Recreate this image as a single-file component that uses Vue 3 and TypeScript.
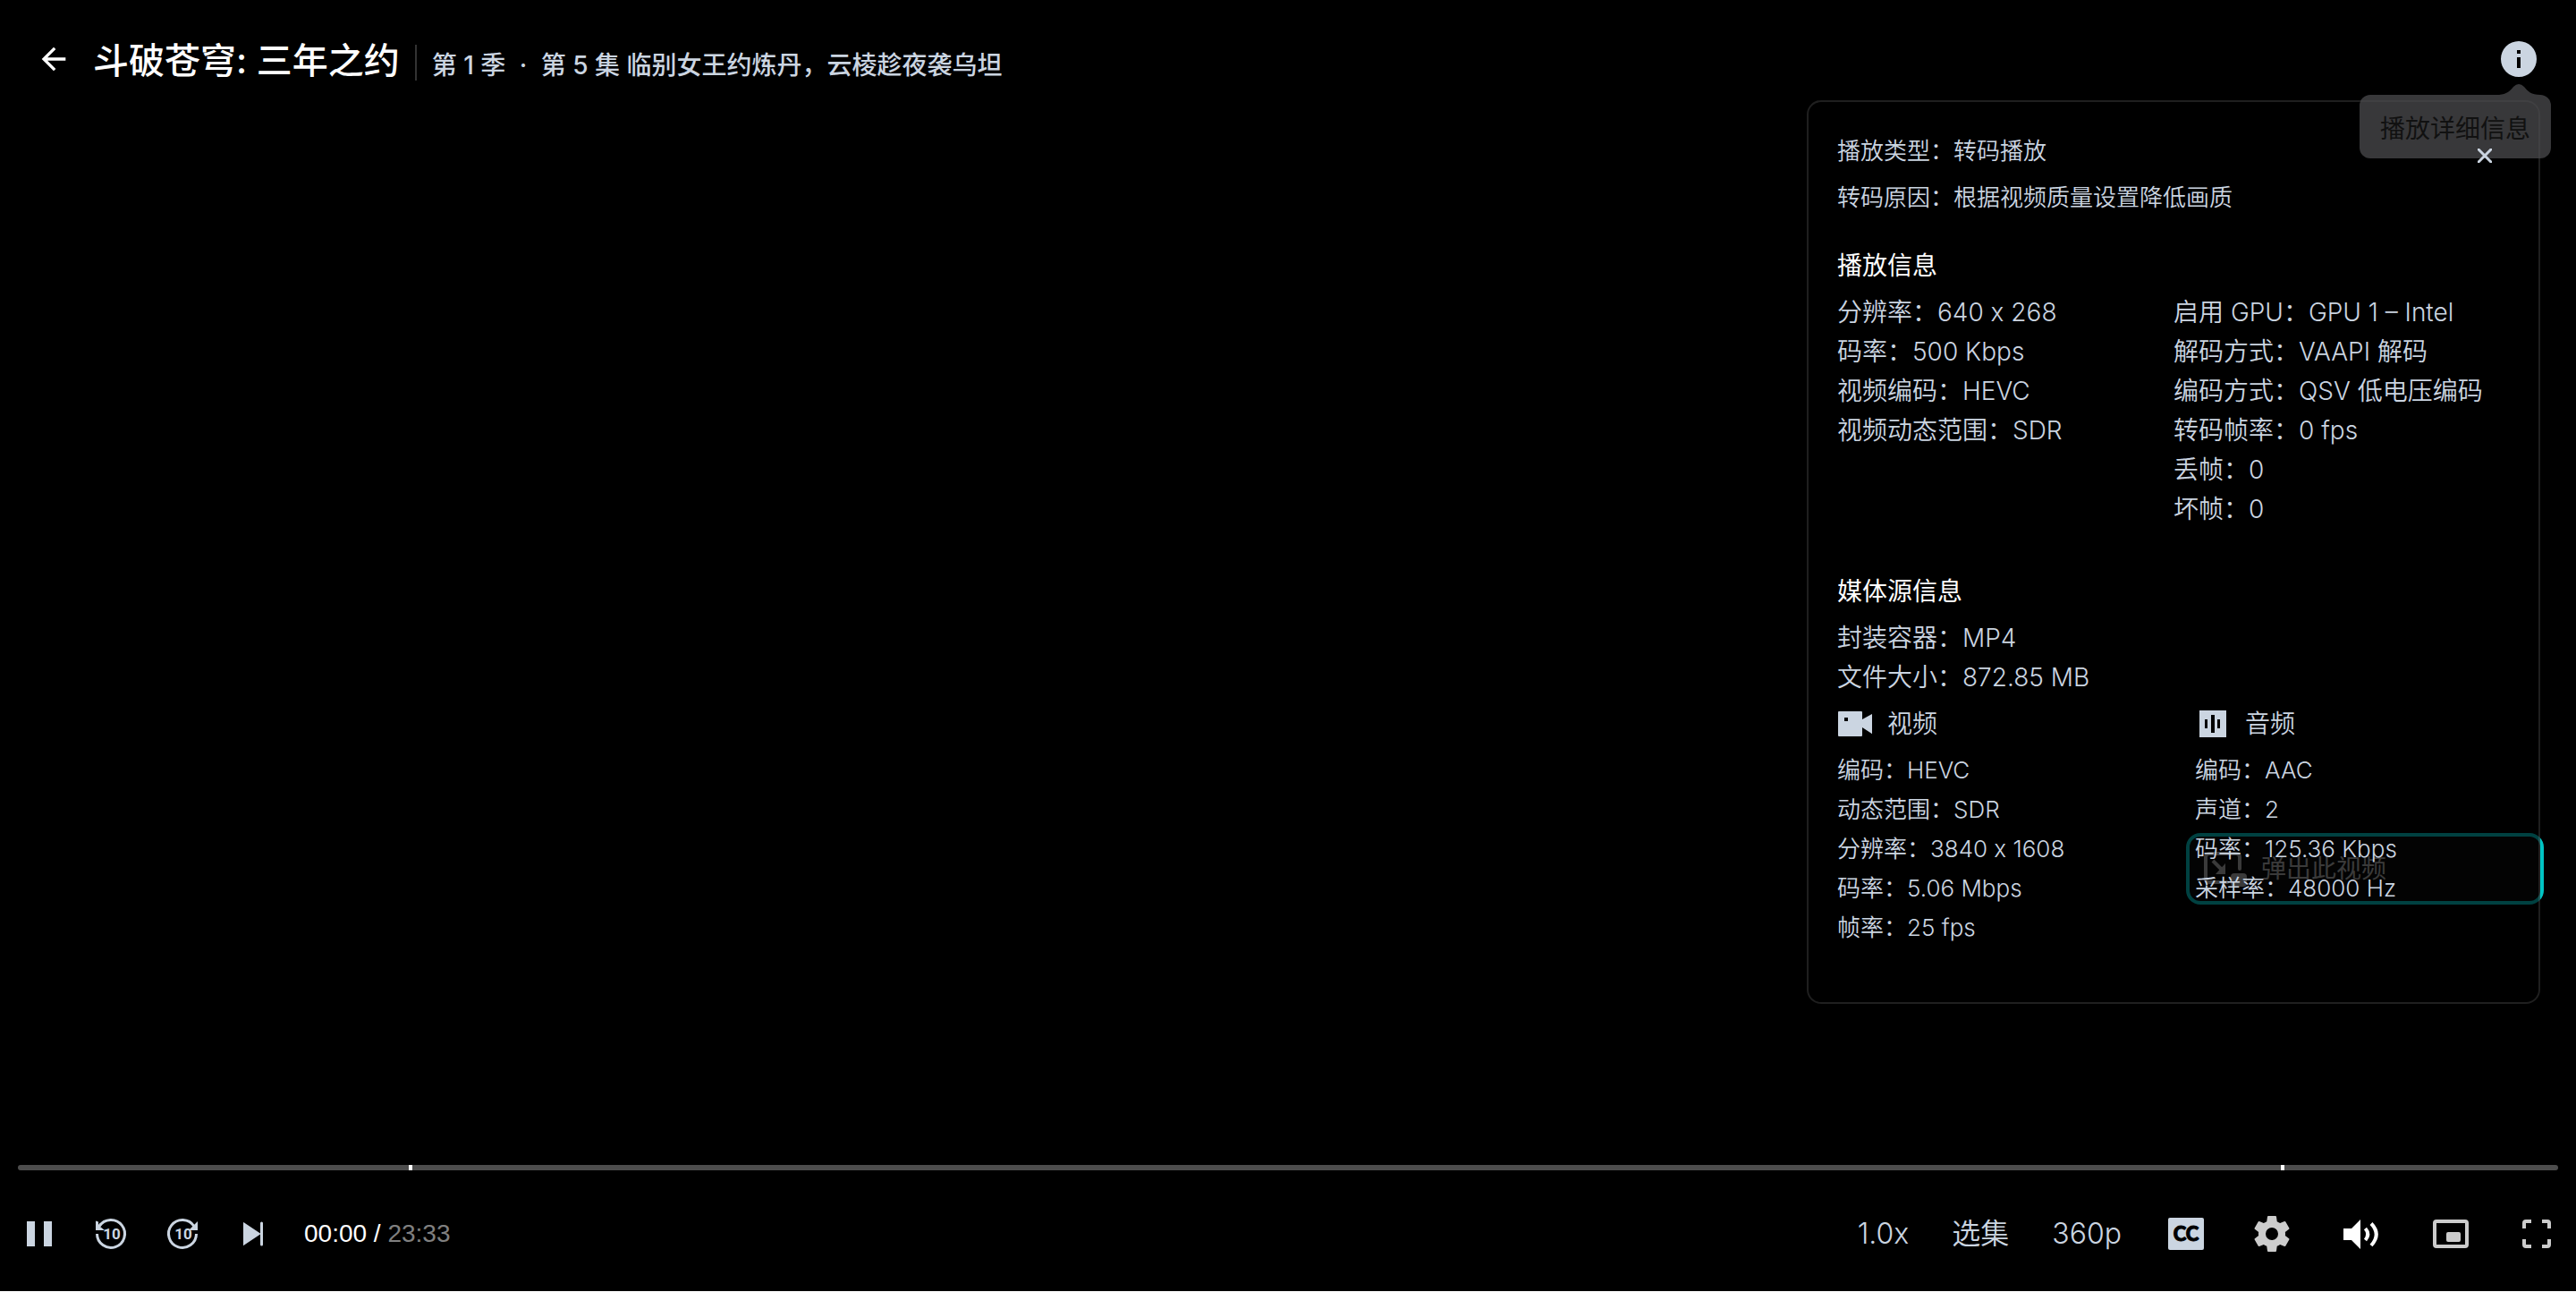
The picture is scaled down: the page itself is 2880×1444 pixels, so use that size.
<script setup lang="ts">
import { ref } from 'vue'

interface InfoRow {
  label: string
  value: string
}

const summary: InfoRow[] = [
  { label: '播放类型', value: '转码播放' },
  { label: '转码原因', value: '根据视频质量设置降低画质' },
]

const playback: InfoRow[][] = [
  [
    { label: '分辨率', value: '640 x 268' },
    { label: '码率', value: '500 Kbps' },
    { label: '视频编码', value: 'HEVC' },
    { label: '视频动态范围', value: 'SDR' },
  ],
  [
    { label: '启用 GPU', value: 'GPU 1 – Intel' },
    { label: '解码方式', value: 'VAAPI 解码' },
    { label: '编码方式', value: 'QSV 低电压编码' },
    { label: '转码帧率', value: '0 fps' },
    { label: '丢帧', value: '0' },
    { label: '坏帧', value: '0' },
  ],
]

const source: InfoRow[] = [
  { label: '封装容器', value: 'MP4' },
  { label: '文件大小', value: '872.85 MB' },
]

const videoTrack: InfoRow[] = [
  { label: '编码', value: 'HEVC' },
  { label: '动态范围', value: 'SDR' },
  { label: '分辨率', value: '3840 x 1608' },
  { label: '码率', value: '5.06 Mbps' },
  { label: '帧率', value: '25 fps' },
]

const audioTrack: InfoRow[] = [
  { label: '编码', value: 'AAC' },
  { label: '声道', value: '2' },
  { label: '码率', value: '125.36 Kbps' },
  { label: '采样率', value: '48000 Hz' },
]

const position = ref(0)
// Intro and outro marks, in percent of the running time.
const marks: number[] = [15.4, 89.1]
</script>

<template>
  <div class="player">
    <header class="top">
      <button class="icon-btn back" type="button" aria-label="返回">
        <svg width="40" height="40" viewBox="0 0 24 24" fill="currentColor">
          <path d="M20 11H7.83l5.59-5.59L12 4l-8 8 8 8 1.41-1.41L7.83 13H20v-2z" />
        </svg>
      </button>
      <h1 class="title">斗破苍穹: 三年之约</h1>
      <p class="episode">第 1 季 <span class="dot">·</span> 第 5 集 临别女王约炼丹，云棱趁夜袭乌坦</p>
      <div class="info">
        <button class="icon-btn" type="button" aria-label="播放详细信息" aria-describedby="info-tip">
          <svg width="48" height="48" viewBox="0 0 24 24" fill="currentColor">
            <path fill-rule="evenodd" d="M12 2a10 10 0 1 0 0 20 10 10 0 0 0 0-20zM11 7h2v2h-2zM11 11h2v6h-2z" />
          </svg>
        </button>
        <div id="info-tip" class="tooltip" role="tooltip">
          <svg class="tip-arrow" width="48" height="12" viewBox="0 0 48 12" fill="currentColor">
            <path d="M0 12C10 12 14 8 18 3Q24 -3 30 3C34 8 38 12 48 12z" />
          </svg>
          <span class="tip-text">播放详细信息</span>
        </div>
      </div>
    </header>

    <main class="stage">
      <div class="overlay">
        <button class="popout" type="button">
          <svg width="48" height="40" viewBox="0 0 48 40" fill="none" stroke="currentColor" stroke-width="4">
            <path d="M26 35H6q-4 0-4-4V7q0-4 4-4H36q4 0 4 4V20" stroke-linecap="round" />
            <path d="M10 11L21 22" />
            <path d="M24 14V26H13z" fill="currentColor" stroke="none" />
            <rect x="30" y="25" width="18" height="15" rx="4" fill="currentColor" stroke="none" />
          </svg>
          <span>弹出此视频</span>
        </button>

        <section class="panel" aria-label="播放详细信息">
          <button class="close" type="button" aria-label="关闭">
            <svg width="16" height="16" viewBox="0 0 16 16" stroke="currentColor" stroke-width="3">
              <path d="M0 0L16 16M16 0L0 16" />
            </svg>
          </button>

          <div class="summary">
            <p v-for="row in summary" :key="row.label">{{ row.label }}：{{ row.value }}</p>
          </div>

          <h2>播放信息</h2>
          <div class="playback">
            <div v-for="(column, i) in playback" :key="i">
              <p v-for="row in column" :key="row.label">{{ row.label }}：{{ row.value }}</p>
            </div>
          </div>

          <h2 class="source-head">媒体源信息</h2>
          <div>
            <p v-for="row in source" :key="row.label">{{ row.label }}：{{ row.value }}</p>
          </div>

          <div class="tracks">
            <div>
              <h3>
                <svg width="40" height="40" viewBox="0 0 40 40" fill="currentColor">
                  <path fill-rule="evenodd" d="M2 6H27q1 0 1 1V15L38 9.500q1-1 1 0V30.500q0 1-1 0L28 24V33q0 1-1 1H2q-1 0-1-1V7q0-1 1-1zM8 13v4h4v-4z" />
                </svg>
                视频
              </h3>
              <p v-for="row in videoTrack" :key="row.label">{{ row.label }}：{{ row.value }}</p>
            </div>
            <div>
              <h3>
                <svg width="40" height="40" viewBox="0 0 40 40" fill="currentColor">
                  <path fill-rule="evenodd" d="M5 5H35V35H5zM11 15v10h3V15zM18 10v20h4V10zM25 15v10h3V15z" />
                </svg>
                音频
              </h3>
              <p v-for="row in audioTrack" :key="row.label">{{ row.label }}：{{ row.value }}</p>
            </div>
          </div>
        </section>
      </div>
    </main>

    <footer class="bottom">
      <div class="progress">
        <input v-model.number="position" type="range" min="0" max="1413" aria-label="播放进度" />
        <span v-for="mark in marks" :key="mark" class="mark" :style="{ left: mark + '%' }"></span>
      </div>

      <div class="controls">
        <div class="group left">
          <button class="icon-btn" type="button" aria-label="暂停">
            <svg width="48" height="48" viewBox="0 0 48 48" fill="currentColor">
              <path d="M10 10h9v28h-9zM29 10h9v28h-9z" />
            </svg>
          </button>
          <button class="icon-btn" type="button" aria-label="后退 10 秒">
            <svg width="48" height="48" viewBox="0 0 48 48" fill="currentColor">
              <path d="M8.500 24A15.500 15.500 0 1 0 11 15.500" fill="none" stroke="currentColor" stroke-width="3" />
              <path d="M7 9.500l3 1v3.500l2-2.500 2 2-2 2.500 5 4H7z" />
              <text x="25" y="30" class="skip">10</text>
            </svg>
          </button>
          <button class="icon-btn" type="button" aria-label="前进 10 秒">
            <svg width="48" height="48" viewBox="0 0 48 48" fill="currentColor">
              <path d="M39.500 24A15.500 15.500 0 1 1 37 15.500" fill="none" stroke="currentColor" stroke-width="3" />
              <path d="M41 10V20H31z" />
              <text x="25" y="30" class="skip">10</text>
            </svg>
          </button>
          <button class="icon-btn" type="button" aria-label="下一集">
            <svg width="48" height="48" viewBox="0 0 48 48" fill="currentColor">
              <path d="M12 11.500q0-1 1 0L31 23.500V12q0-1.500 1.500-1.500T34 12V36q0 1.500-1.500 1.500T31 36V24.500L13 36.500q-1 1-1 0z" />
            </svg>
          </button>
          <div class="time">00:00 / <span>23:33</span></div>
        </div>

        <div class="group right">
          <button class="text-btn" type="button">1.0x</button>
          <button class="text-btn" type="button">选集</button>
          <button class="text-btn" type="button">360p</button>
          <button class="icon-btn" type="button" aria-label="字幕">
            <svg width="48" height="48" viewBox="0 0 48 48" fill="currentColor">
              <rect x="4" y="6" width="40" height="36" rx="2" />
              <text x="24" y="32" class="cc">CC</text>
            </svg>
          </button>
          <button class="icon-btn grey" type="button" aria-label="设置">
            <svg width="48" height="48" viewBox="0 0 24 24" fill="currentColor">
              <path d="M12,15.5A3.5,3.5 0 0,1 8.5,12A3.5,3.5 0 0,1 12,8.5A3.5,3.5 0 0,1 15.5,12A3.5,3.5 0 0,1 12,15.5M19.43,12.97C19.47,12.65 19.5,12.33 19.5,12C19.5,11.67 19.47,11.34 19.43,11L21.54,9.37C21.73,9.22 21.78,8.95 21.66,8.73L19.66,5.27C19.54,5.05 19.27,4.96 19.05,5.05L16.56,6.05C16.04,5.66 15.5,5.32 14.87,5.07L14.5,2.42C14.46,2.18 14.25,2 14,2H10C9.75,2 9.54,2.18 9.5,2.42L9.13,5.07C8.5,5.32 7.96,5.66 7.44,6.05L4.95,5.05C4.73,4.96 4.46,5.05 4.34,5.27L2.34,8.73C2.21,8.95 2.27,9.22 2.46,9.37L4.57,11C4.53,11.34 4.5,11.67 4.5,12C4.5,12.33 4.53,12.65 4.57,12.97L2.46,14.63C2.27,14.78 2.21,15.05 2.34,15.27L4.34,18.73C4.46,18.95 4.73,19.03 4.95,18.95L7.44,17.94C7.96,18.34 8.5,18.68 9.13,18.93L9.5,21.58C9.54,21.82 9.75,22 10,22H14C14.25,22 14.46,21.82 14.5,21.58L14.87,18.93C15.5,18.67 16.04,18.34 16.56,17.94L19.05,18.95C19.27,19.03 19.54,18.95 19.66,18.73L21.66,15.27C21.78,15.05 21.73,14.78 21.54,14.63L19.43,12.97Z" />
            </svg>
          </button>
          <button class="icon-btn volume" type="button" aria-label="音量">
            <svg width="48" height="48" viewBox="0 0 48 48" fill="currentColor">
              <path d="M4 18h9L23 8V41L13 31H4z" />
              <path d="M28.500 18Q34 24.500 28.500 31" fill="none" stroke="currentColor" stroke-width="4" />
              <path d="M35 12.500Q46.500 24.500 35 37" fill="none" stroke="currentColor" stroke-width="4" />
            </svg>
          </button>
          <button class="icon-btn grey" type="button" aria-label="画中画">
            <svg width="48" height="48" viewBox="0 0 48 48" fill="currentColor">
              <rect x="6" y="10" width="36" height="28" rx="2" fill="none" stroke="currentColor" stroke-width="4" />
              <rect x="19" y="22" width="16" height="11" rx="2" />
            </svg>
          </button>
          <button class="icon-btn grey" type="button" aria-label="全屏">
            <svg width="48" height="48" viewBox="0 0 48 48" fill="none" stroke="currentColor" stroke-width="4">
              <path d="M18 10H12q-2 0-2 2V18M30 10H36q2 0 2 2V18M18 38H12q-2 0-2-2V30M30 38H36q2 0 2-2V30" />
            </svg>
          </button>
        </div>
      </div>
    </footer>
  </div>
</template>

<style>
body {
  margin: 0;
}
</style>

<style scoped>
.player {
  display: flex;
  flex-direction: column;
  box-sizing: border-box;
  min-height: calc(100vh - 1px);
  background: #000;
  color: #cbd5e1;
  font-family: Inter, "Noto Sans CJK SC", sans-serif;
  font-size: 28px;
  font-weight: 350;
  line-height: 44px;
}

h1,
h2,
h3,
p {
  margin: 0;
  font-weight: inherit;
}

svg {
  display: block;
  flex: none;
}

button {
  padding: 0;
  border: 0;
  background: none;
  color: inherit;
  font: inherit;
  cursor: pointer;
}

.icon-btn {
  display: flex;
  flex: none;
  align-items: center;
  justify-content: center;
  width: 48px;
  height: 48px;
}

.top {
  display: flex;
  align-items: center;
  box-sizing: border-box;
  height: 112px;
  padding: 20px 40px 0 36px;
}

.back {
  margin-right: 20px;
  color: #fff;
}

.title {
  margin-top: 4px;
  color: #fff;
  font-size: 40px;
  font-weight: 500;
  line-height: 48px;
}

.episode {
  height: 40px;
  margin: 8px 0 0 17px;
  padding-left: 17px;
  border-left: 2px solid #333;
  font-weight: 500;
  line-height: 46px;
}

.dot {
  margin: 0 8px;
}

.info {
  position: relative;
  margin-left: auto;
}

.tooltip {
  position: absolute;
  z-index: 2;
  top: 64px;
  right: -12px;
  padding: 16px 23px 11px;
  border-radius: 12px;
  background: rgba(76, 76, 78, 0.74);
  color: #111;
  font-weight: 400;
  white-space: nowrap;
}

.tip-arrow {
  position: absolute;
  top: -12px;
  right: 12px;
  color: rgba(76, 76, 78, 0.74);
}

.tip-text {
  display: block;
}

.stage {
  display: flex;
  flex: 1;
  align-items: flex-start;
  justify-content: flex-end;
  padding: 0 40px;
}

.overlay {
  position: relative;
}

.popout {
  position: absolute;
  right: -4px;
  bottom: 111px;
  display: flex;
  align-items: center;
  gap: 16px;
  box-sizing: border-box;
  width: 400px;
  height: 80px;
  padding-left: 16px;
  border: 4px solid #00c4c4;
  border-radius: 16px;
  background: #0a0a0a;
  color: #b0b0b0;
  font-weight: 400;
  line-height: 48px;
}

.panel {
  position: relative;
  box-sizing: border-box;
  width: 820px;
  padding: 33px 32px 61px;
  border: 2px solid rgba(255, 255, 255, 0.12);
  border-radius: 16px;
  background: rgba(0, 0, 0, 0.67);
}

.close {
  position: absolute;
  z-index: 3;
  top: 52px;
  right: 52px;
}

.summary {
  display: flex;
  flex-direction: column;
  gap: 8px;
  font-size: 26px;
}

h2 {
  margin: 32px 0 8px;
  color: #fff;
  font-size: 28px;
  font-weight: 400;
}

.source-head {
  margin-top: 48px;
}

.playback {
  display: grid;
  grid-template-columns: 1fr 1fr;
}

.tracks {
  display: grid;
  grid-template-columns: 1fr 1fr;
  gap: 48px;
  margin-top: 8px;
  font-size: 26px;
}

h3 {
  display: flex;
  align-items: center;
  gap: 16px;
  margin-bottom: 8px;
  font-size: 28px;
}

.bottom {
  padding: 0 20px 40px;
}

.progress {
  position: relative;
  height: 6px;
}

.progress input {
  display: block;
  width: 100%;
  height: 6px;
  margin: 0;
  border-radius: 3px;
  background: #4d4d4d;
  appearance: none;
}

.progress input::-webkit-slider-thumb {
  width: 0;
  height: 0;
  appearance: none;
}

.mark {
  position: absolute;
  top: 0;
  width: 4px;
  height: 6px;
  background: #fff;
}

.controls {
  display: flex;
  align-items: center;
  justify-content: space-between;
  margin-top: 47px;
}

.group {
  display: flex;
  align-items: center;
}

.left {
  gap: 32px;
}

.right {
  gap: 48px;
}

.time {
  color: #fff;
  font-family: "Liberation Sans", sans-serif;
}

.time span {
  color: #808080;
}

.text-btn {
  font-size: 32px;
  line-height: 48px;
}

.grey {
  color: #ccc;
}

.volume {
  width: 56px;
  color: #fff;
}

.skip {
  font: 700 17px Roboto, sans-serif;
  text-anchor: middle;
}

.cc {
  fill: #000;
  stroke: #000;
  font: 900 22px Lato, sans-serif;
  text-anchor: middle;
}
</style>
